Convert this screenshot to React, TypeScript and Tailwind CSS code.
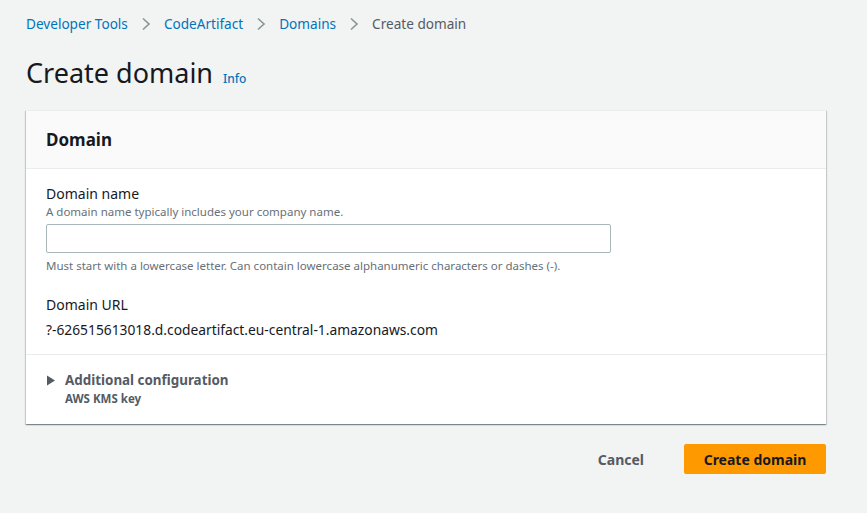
import React from 'react';

const font = { fontFamily: '"Noto Sans", "Open Sans", Arial, sans-serif' };

const Chevron = () => (
  <svg className="mx-[13px] h-[14px] w-[10px] text-[#879596]" viewBox="0 0 10 14" fill="none">
    <path d="M2 1.5 L8 7 L2 12.5" stroke="currentColor" strokeWidth="1.6" />
  </svg>
);

export default function App() {
  return (
    <div className="min-h-[513px] w-full bg-[#f2f3f3] px-[26px] text-[#16191f]" style={font}>
      <nav className="flex h-[48px] items-center text-[13.6px]">
        <a className="text-[#0073bb]">Developer Tools</a>
        <Chevron />
        <a className="text-[#0073bb]">CodeArtifact</a>
        <Chevron />
        <a className="text-[#0073bb]">Domains</a>
        <Chevron />
        <span className="text-[#545b64]">Create domain</span>
      </nav>

      <div className="flex h-[50px] items-center">
        <h1 className="text-[27px] leading-[34px] text-[#16191f]">Create domain</h1>
        <span className="ml-[10px] mt-[11px] text-[12px] font-medium text-[#0073bb]">Info</span>
      </div>

      <div className="mt-[12px] w-[800px] border-t border-[#eaeded] bg-white shadow-[0_1px_1px_0_rgba(0,28,36,0.3),1px_1px_1px_0_rgba(0,28,36,0.15),-1px_1px_1px_0_rgba(0,28,36,0.15)]">
        <div className="flex h-[58px] items-center border-b border-[#eaeded] bg-[#fafafa] px-[20px]">
          <h2 className="text-[17px] font-bold">Domain</h2>
        </div>

        <div className="px-[20px] pb-[14px] pt-[15px]">
          <div className="text-[14px] leading-[20px]">Domain name</div>
          <div className="text-[11.5px] leading-[16px] text-[#687078]">
            A domain name typically includes your company name.
          </div>
          <input
            className="mt-[4px] block h-[29px] w-[565px] rounded-[2px] border border-[#aab7b8] px-[10px] text-[14px] outline-none"
          />
          <div className="mt-[5px] text-[11.5px] leading-[16px] text-[#687078]">
            Must start with a lowercase letter. Can contain lowercase alphanumeric characters or dashes (-).
          </div>

          <div className="mt-[21px] text-[14px] leading-[20px]">Domain URL</div>
          <div className="mt-[5px] text-[13.8px] leading-[20px]">
            ?-626515613018.d.codeartifact.eu-central-1.amazonaws.com
          </div>
        </div>

        <div className="border-t border-[#eaeded] px-[20px] pb-[17px] pt-[15px]">
          <div className="flex items-center">
            <svg className="ml-[1px] mr-[10px] h-[11px] w-[8px] text-[#545b64]" viewBox="0 0 8 11">
              <path d="M0 0.5 L8 5.5 L0 10.5 Z" fill="currentColor" />
            </svg>
            <span className="text-[13.4px] font-bold leading-[20px] text-[#545b64]">Additional configuration</span>
          </div>
          <div className="ml-[19px] mt-[1px] text-[11.5px] font-bold leading-[16px] text-[#545b64]">AWS KMS key</div>
        </div>
      </div>

      <div className="mt-[20px] flex w-[800px] items-center justify-end">
        <button className="mr-[20px] px-[20px] py-[4px] text-[14px] font-bold text-[#545b64]">Cancel</button>
        <button className="h-[30px] w-[142px] rounded-[2px] bg-[#ff9900] text-[14px] font-bold text-[#16191f]">
          Create domain
        </button>
      </div>
    </div>
  );
}
